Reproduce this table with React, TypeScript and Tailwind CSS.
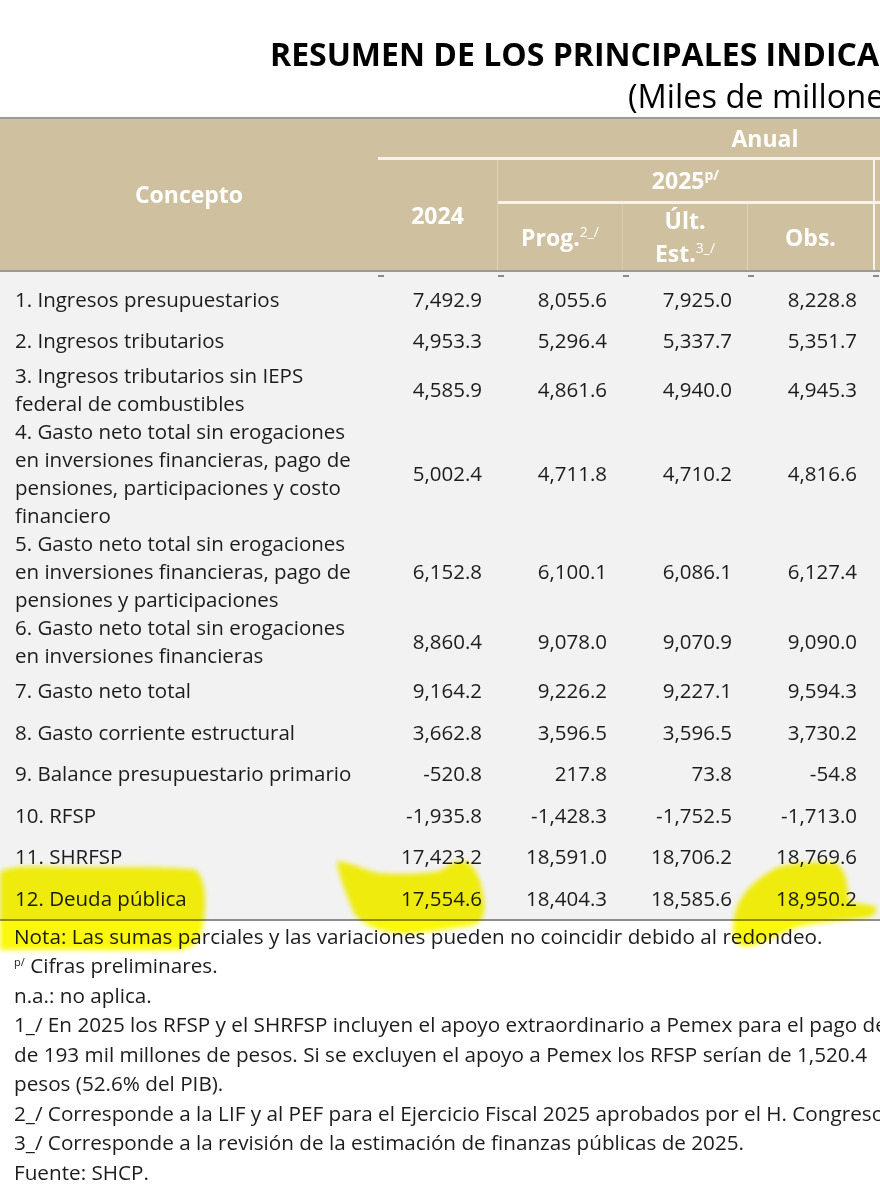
import React from "react";

const rows: { c: string; v: string[] }[] = [
  { c: "1. Ingresos presupuestarios", v: ["7,492.9", "8,055.6", "7,925.0", "8,228.8"] },
  { c: "2. Ingresos tributarios", v: ["4,953.3", "5,296.4", "5,337.7", "5,351.7"] },
  { c: "3. Ingresos tributarios sin IEPS federal de combustibles", v: ["4,585.9", "4,861.6", "4,940.0", "4,945.3"] },
  { c: "4. Gasto neto total sin erogaciones en inversiones financieras, pago de pensiones, participaciones y costo financiero", v: ["5,002.4", "4,711.8", "4,710.2", "4,816.6"] },
  { c: "5. Gasto neto total sin erogaciones en inversiones financieras, pago de pensiones y participaciones", v: ["6,152.8", "6,100.1", "6,086.1", "6,127.4"] },
  { c: "6. Gasto neto total sin erogaciones en inversiones financieras", v: ["8,860.4", "9,078.0", "9,070.9", "9,090.0"] },
  { c: "7. Gasto neto total", v: ["9,164.2", "9,226.2", "9,227.1", "9,594.3"] },
  { c: "8. Gasto corriente estructural", v: ["3,662.8", "3,596.5", "3,596.5", "3,730.2"] },
  { c: "9. Balance presupuestario primario", v: ["-520.8", "217.8", "73.8", "-54.8"] },
  { c: "10. RFSP", v: ["-1,935.8", "-1,428.3", "-1,752.5", "-1,713.0"] },
  { c: "11. SHRFSP", v: ["17,423.2", "18,591.0", "18,706.2", "18,769.6"] },
  { c: "12. Deuda pública", v: ["17,554.6", "18,404.3", "18,585.6", "18,950.2"] },
];

const gridCols = "grid grid-cols-[378px_120px_125px_125px_125px_1fr]";

export default function App() {
  return (
    <div
      className="relative w-[880px] h-[1200px] overflow-hidden bg-white text-[#1c1c1c]"
      style={{ fontFamily: '"Open Sans", "Noto Sans", sans-serif' }}
    >
      <div className="w-[1152px]">
        {/* Title block */}
        <div className="h-[117px]">
          <div className="pt-[34px] pl-[270px] text-[32px] leading-[40px] font-bold whitespace-nowrap text-black">
            RESUMEN DE LOS PRINCIPALES INDICADORES
          </div>
          <div className="mt-[4px] pl-[628px] text-[32.5px] leading-[36px] whitespace-nowrap text-black">
            (Miles de millones de pesos)
          </div>
        </div>

        {/* Header */}
        <div className="border-t-2 border-b-2 border-[#9a9a9a] bg-[#cfc0a0] text-white font-bold text-[23px]">
          <div className="flex h-[151px]">
            <div className="w-[378px] flex items-center justify-center">Concepto</div>
            <div className="flex-1 flex flex-col">
              <div className="h-[44px] border-b-[3px] border-[#f7f3ea] flex items-center justify-center">
                Anual
              </div>
              <div className="flex-1 flex">
                <div className="w-[120px] border-r border-[#ddd2bb] flex items-center justify-center">2024</div>
                <div className="flex-1 flex flex-col">
                  <div className="h-[44px] border-b-[3px] border-[#f7f3ea] flex">
                    <div className="w-[375px] flex items-center justify-center">
                      <span>
                        2025<sup className="text-[14px] font-bold relative -top-[9px]">p/</sup>
                      </span>
                    </div>
                    <div className="flex-1 border-l-2 border-[#f7f3ea]" />
                  </div>
                  <div className="flex-1 flex">
                    <div className="w-[125px] border-r border-[#d8ccb3] flex items-center justify-center">
                      <span>
                        Prog.<sup className="text-[14px] font-normal relative -top-[9px]">2_/</sup>
                      </span>
                    </div>
                    <div className="w-[125px] border-r border-[#ddd2bb] flex flex-col items-center justify-center leading-[33px]">
                      <span>Últ.</span>
                      <span>
                        Est.<sup className="text-[14px] font-normal relative -top-[9px]">3_/</sup>
                      </span>
                    </div>
                    <div className="w-[125px] flex items-center justify-center">Obs.</div>
                    <div className="flex-1 border-l-2 border-[#f7f3ea]" />
                  </div>
                </div>
              </div>
            </div>
          </div>
        </div>

        {/* Body */}
        <div className="bg-[#f2f2f2] border-b-2 border-[#8e8e8e] text-[20.5px]">
          <div className={`${gridCols} h-[6px]`}>
            <div />
            {[0, 1, 2, 3, 4].map((i) => (
              <div key={i} className="pt-[3px]">
                <div className="w-[6px] h-[2px] bg-[#8a8a8a]" />
              </div>
            ))}
          </div>
          {rows.map((r) => (
            <div key={r.c} className={`${gridCols} min-h-[41.6px] leading-[28px]`}>
              <div className="pl-[15px] pr-[12px] flex items-center">{r.c}</div>
              {r.v.map((v, i) => (
                <div key={i} className="pr-4 flex items-center justify-end">
                  {v}
                </div>
              ))}
              <div />
            </div>
          ))}
        </div>

        {/* Footnotes */}
        <div className="pl-[14px] pt-[1px] text-[20.7px] leading-[29.5px] whitespace-nowrap">
          <div>Nota: Las sumas parciales y las variaciones pueden no coincidir debido al redondeo.</div>
          <div>
            <sup className="text-[11px] relative -top-[7px]">p/</sup> Cifras preliminares.
          </div>
          <div>n.a.: no aplica.</div>
          <div>1_/ En 2025 los RFSP y el SHRFSP incluyen el apoyo extraordinario a Pemex para el pago de</div>
          <div>de 193 mil millones de pesos. Si se excluyen el apoyo a Pemex los RFSP serían de 1,520.4</div>
          <div>pesos (52.6% del PIB).</div>
          <div>2_/ Corresponde a la LIF y al PEF para el Ejercicio Fiscal 2025 aprobados por el H. Congreso</div>
          <div>3_/ Corresponde a la revisión de la estimación de finanzas públicas de 2025.</div>
          <div>Fuente: SHCP.</div>
        </div>
      </div>

      {/* Highlighter marks overlay */}
      <svg
        className="absolute left-0 top-0 pointer-events-none mix-blend-multiply"
        width="880"
        height="1200"
        viewBox="0 0 880 1200"
      >
        <defs>
          <filter id="blur" x="-10%" y="-10%" width="120%" height="120%">
            <feGaussianBlur stdDeviation="2.5" />
          </filter>
        </defs>
        <g fill="#fbf800" opacity="0.95" filter="url(#blur)">
          <path d="M0 872 C10 866 30 866 60 867 C110 868 170 866 196 870 C206 880 207 905 203 925 C200 940 196 948 180 950 C140 951 60 950 0 950 Z" />
          <path d="M337 861 C350 862 365 870 378 873 C400 875 425 874 440 871 C448 866 455 860 463 861 C475 864 482 880 484 900 C486 915 482 924 470 926 C450 928 425 934 402 934 C380 932 362 925 354 913 C347 895 338 875 337 861 Z" />
          <path d="M776 868 C790 863 815 861 835 863 C846 868 848 885 849 902 C858 904 870 904 876 907 C878 912 874 916 866 918 C840 921 815 923 798 927 C785 932 770 940 752 946 C740 948 733 944 733 930 C733 905 745 885 776 868 Z" />
        </g>
      </svg>
    </div>
  );
}
